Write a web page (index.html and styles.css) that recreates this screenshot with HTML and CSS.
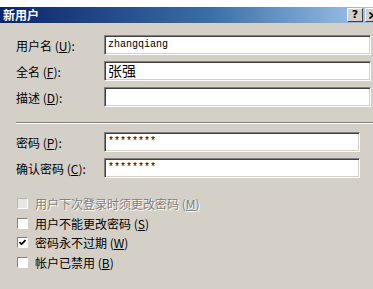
FILE: index.html
```html
<!DOCTYPE html>
<html lang="zh-CN">
<head>
    <meta charset="UTF-8">
    <title>新用户</title>
    <link rel="stylesheet" href="styles.css">
</head>
<body>

    <div class="window">
        <div class="titlebar">
            <span class="title">新用户</span>
            <div class="ctrls">
                <span class="tbtn">?</span>
                <span class="tbtn">
                    <svg width="8" height="7" viewBox="0 0 8 7"><path d="M0.5 0.5l7 6M7.5 0.5l-7 6" stroke="#000" stroke-width="1.6"/></svg>
                </span>
            </div>
        </div>

        <form class="dialog">
            <div class="row">
                <label>用户名 (<u>U</u>):</label>
                <div class="box wide mono">zhangqiang</div>
            </div>
            <div class="row">
                <label>全名 (<u>F</u>):</label>
                <div class="box wide cjk">张强</div>
            </div>
            <div class="row">
                <label>描述 (<u>D</u>):</label>
                <div class="box wide"></div>
            </div>

            <div class="sep"></div>

            <div class="row">
                <label>密码 (<u>P</u>):</label>
                <div class="box mono">********</div>
            </div>
            <div class="row">
                <label>确认密码 (<u>C</u>):</label>
                <div class="box mono">********</div>
            </div>

            <div class="checks">
                <div class="check disabled"><span class="cb"></span>用户下次登录时须更改密码 (<u>M</u>)</div>
                <div class="check"><span class="cb"></span>用户不能更改密码 (<u>S</u>)</div>
                <div class="check"><span class="cb">
                    <svg width="7" height="7" viewBox="0 0 7 7"><polyline points="0.5,3 2.5,5.3 6.5,1" fill="none" stroke="#000" stroke-width="1.7"/></svg>
                </span>密码永不过期 (<u>W</u>)</div>
                <div class="check"><span class="cb"></span>帐户已禁用 (<u>B</u>)</div>
            </div>
        </form>
    </div>

</body>
</html>
```

FILE: styles.css
```css
body {
    margin: 0;
    background: #fff;
    font-family: "Noto Sans CJK SC", "DejaVu Sans", sans-serif;
    font-size: 12px;
    overflow: hidden;
}
.window {
    margin-top: 7px;
    width: 381px;
    height: 282px;
    background: #d4d0c8;
}
.titlebar {
    height: 16px;
    display: flex;
    align-items: center;
    justify-content: space-between;
    padding-left: 3px;
    background: linear-gradient(to right, #0a246a, #3a6ea5 55%, #a6caf0);
}
.title {
    color: #fff;
    font-weight: bold;
    font-size: 12px;
    line-height: 16px;
}
.ctrls {
    display: flex;
    gap: 2px;
}
.tbtn {
    width: 14px;
    height: 12px;
    background: #d4d0c8;
    border-top: 1px solid #fff;
    border-left: 1px solid #fff;
    border-right: 1px solid #404040;
    border-bottom: 1px solid #404040;
    font-family: "DejaVu Sans", sans-serif;
    font-weight: bold;
    font-size: 11px;
    line-height: 12px;
    text-align: center;
    display: flex;
    align-items: center;
    justify-content: center;
}
.dialog {
    padding: 12px 0 0 16px;
}
.row {
    display: flex;
    align-items: center;
    height: 20px;
    margin-bottom: 6px;
}
.row label {
    width: 88px;
    flex: none;
}
u {
    text-decoration: underline;
}
.box {
    box-sizing: border-box;
    width: 256px;
    height: 20px;
    background: #fff;
    border-top: 1px solid #808080;
    border-left: 1px solid #808080;
    border-right: 1px solid #fff;
    border-bottom: 1px solid #fff;
    box-shadow: inset 1px 1px #404040, inset -1px -1px #d4d0c8;
    padding-left: 3px;
    line-height: 18px;
}
.box.wide {
    width: 267px;
}
.mono {
    font-family: "Liberation Mono", monospace;
    font-size: 10px;
}
.cjk {
    font-size: 14px;
    line-height: 17px;
}
.sep {
    margin: 15px 0 8px;
    height: 1px;
    border-top: 1px solid #808080;
    background: #fff;
}
.checks {
    margin-top: 16px;
}
.check {
    display: flex;
    align-items: center;
    height: 19.5px;
}
.cb {
    box-sizing: border-box;
    width: 11px;
    height: 11px;
    margin: 0 7px 0 1px;
    background: #fff;
    border-top: 1px solid #808080;
    border-left: 1px solid #808080;
    border-right: 1px solid #fff;
    border-bottom: 1px solid #fff;
    display: flex;
    align-items: center;
    justify-content: center;
}
.check.disabled {
    color: #808080;
    text-shadow: 1px 1px #fff;
}
.check.disabled .cb {
    background: #e8e6e2;
    border-color: #b8b4ac #fff #fff #b8b4ac;
}
```
